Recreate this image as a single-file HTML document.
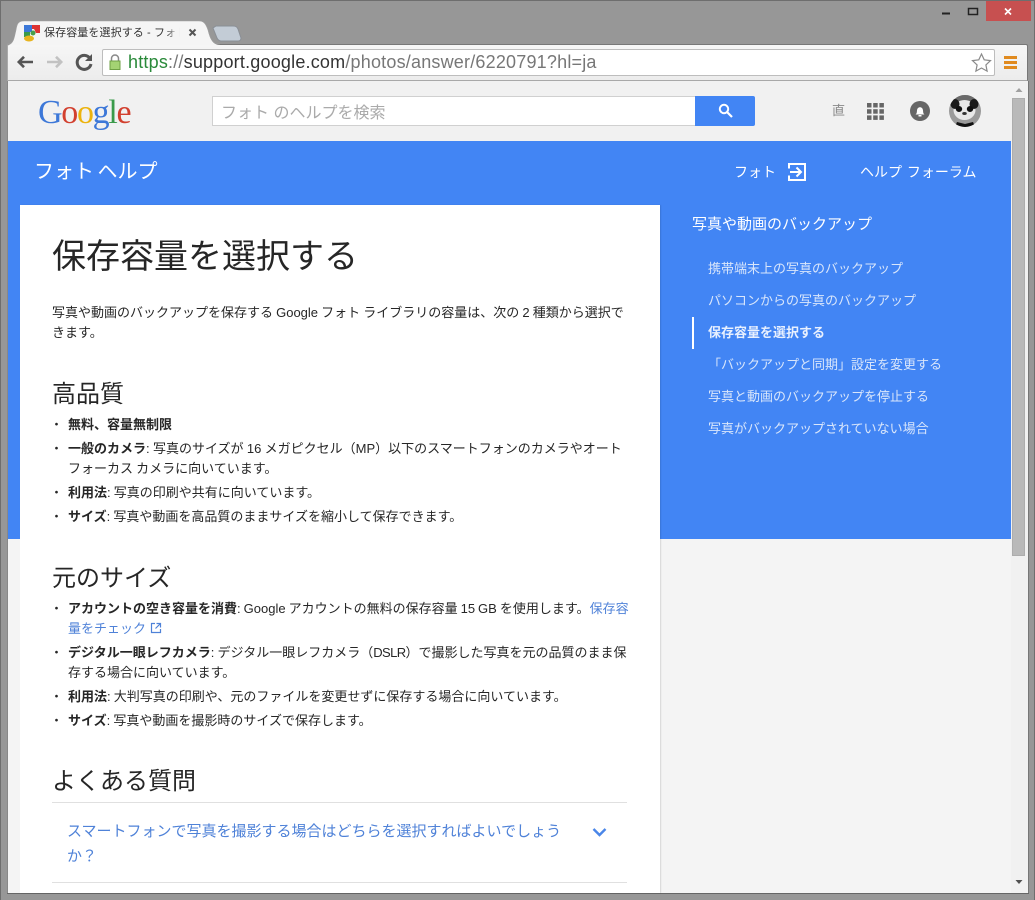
<!DOCTYPE html>
<html lang="ja"><head><meta charset="utf-8"><title>保存容量を選択する</title>
<style>
html,body{margin:0;padding:0;width:1035px;height:900px;overflow:hidden;background:#979797}
body{position:relative;font-family:"Liberation Sans","Noto Sans CJK JP",sans-serif;color:#212121}
.a{position:absolute;white-space:nowrap}
.t13{font-size:13px;line-height:20px;color:#262626}
.s{font-size:13px;color:#d9e6fb;line-height:20px;left:708px}
.h{font-size:24px;line-height:32px;color:#262626;left:52px}
.d{left:50px;font-size:13px;line-height:20px;color:#262626}
b{font-weight:700}
a{color:#4f82d8;text-decoration:none}
</style></head><body>
<!-- window frame -->
<div class="a" style="left:0;top:0;width:1035px;height:900px;box-sizing:border-box;border:1px solid #6e6e6e;border-bottom:0"></div>
<div class="a" style="left:986px;top:1px;width:45px;height:20px;background:#c75050"></div>
<svg class="a" style="left:940px;top:0" width="95" height="22"><path d="M2 13.500h8" stroke="#222" stroke-width="2"/><rect x="28.500" y="8.500" width="9" height="6" fill="none" stroke="#222" stroke-width="1.500"/><path d="M65 8.500l6 6M71 8.500l-6 6" stroke="#fff" stroke-width="1.600"/></svg>
<!-- toolbar -->
<div class="a" style="left:7px;top:44px;width:1021px;height:37px;box-sizing:border-box;background:linear-gradient(#f6f6f6,#ececec);border:1px solid #777;border-left-color:#aaa;border-bottom:1px solid #a8a8a8;border-radius:2px 2px 0 0"></div>
<!-- tab -->
<svg class="a" style="left:7px;top:20px" width="240" height="26"><path d="M209 6H226C229 6 230 7 231 9L234 18C234 20 233 21 231 21H214C212 21 211 20 210 18L206 8Z" fill="#c3ccd6" stroke="#8a8f96"/><path d="M0 25C7 25 7 18 9 10C10 4 11 1 17 1H192C197 1 199 4 201 10C203 18 205 25 213 25Z" fill="#f5f5f5" stroke="none"/><path d="M0 24C7 24 7 18 9 10C10 4 11 1 17 1H192C197 1 199 4 201 10C203 18 205 24 213 24" fill="none" stroke="#a0a0a0" stroke-width=".6"/></svg>
<svg class="a" style="left:24px;top:25px" width="17" height="17"><path d="M0 0h8v7h-8z" fill="#3c78d8"/><path d="M8 0h8v8h-4l-2-4h-2z" fill="#d33"/><path d="M0 7h6v5h-6z" fill="#3a9a4a"/><circle cx="9" cy="8" r="2.500" fill="#4a9e4a"/><ellipse cx="5" cy="13.500" rx="5" ry="3" fill="#e8b41e"/></svg>
<div class="a" style="left:44px;top:24px;width:136px;overflow:hidden;font-size:11px;line-height:18px;color:#333;letter-spacing:.1px">保存容量を選択する - フォト ヘルプ</div>
<div class="a" style="left:165px;top:24px;width:16px;height:18px;background:linear-gradient(90deg,rgba(245,245,245,0),#f5f5f5)"></div>
<svg class="a" style="left:188px;top:28px" width="10" height="10"><path d="M1.500 1.500l6 6M7.500 1.500l-6 6" stroke="#555" stroke-width="2"/></svg>
<svg class="a" style="left:14px;top:50px" width="80" height="24"><path d="M19 12H5.500M10 6.800L4.800 12l5.200 5.200" fill="none" stroke="#555" stroke-width="2.600"/><path d="M33 12H46.500M42 6.800L47.200 12 42 17.200" fill="none" stroke="#c2c2c2" stroke-width="2.600"/><path d="M76 8.500A7 7 0 1 0 77 14" fill="none" stroke="#555" stroke-width="3"/><path d="M78 4v7h-7z" fill="#555"/></svg>
<div class="a" style="left:102px;top:49px;width:893px;height:27px;box-sizing:border-box;background:#fff;border:1px solid #bdbdbd;border-radius:2px"></div>
<svg class="a" style="left:108px;top:53px" width="14" height="18"><path d="M3.500 8V5.500a3.500 3.500 0 0 1 7 0V8" fill="none" stroke="#8a8a8a" stroke-width="1.500"/><rect x="2" y="8" width="10" height="8.500" fill="#a4d373" stroke="#6fa045"/></svg>
<div class="a" style="left:128px;top:51px;font-size:18px;line-height:22px;color:#777;letter-spacing:.2px"><span style="color:#2a8a3a">https</span>://<span style="color:#333">support.google.com</span>/photos/answer/6220791?hl=ja</div>
<svg class="a" style="left:971px;top:52px" width="22" height="21"><path d="M10.500 2l2.700 5.800 6.300.8-4.600 4.300 1.200 6.200-5.600-3.100-5.600 3.100 1.200-6.200L1.500 8.600l6.300-.8z" fill="#fff" stroke="#8a8a8a" stroke-width="1.200"/></svg>
<svg class="a" style="left:1003px;top:55px" width="15" height="15"><path d="M1 2.500h13M1 7.500h13M1 12.500h13" stroke="#e08a1e" stroke-width="3"/></svg>
<!-- page -->
<div class="a" style="left:8px;top:81px;width:1003px;height:812px;background:#f4f4f4"></div>
<div class="a" style="left:8px;top:81px;width:1003px;height:60px;background:#f1f1f1"></div>
<div class="a" style="left:8px;top:141px;width:1003px;height:398px;background:#4285f4"></div>
<div class="a" style="left:1011px;top:81px;width:17px;height:812px;background:#f1f1f1"></div>
<div class="a" style="left:1012px;top:98px;width:13px;height:458px;background:#b9b9b9;box-shadow:inset 0 0 0 1px #adadad"></div>
<svg class="a" style="left:1012px;top:85px" width="14" height="808"><path d="M3.500 7l3.500-4 3.500 4z" fill="#a0a0a0"/><path d="M3.500 795l3.500 4 3.500-4z" fill="#505050"/></svg>
<div class="a" style="left:1028px;top:81px;width:1px;height:812px;background:#777"></div>
<div class="a" style="left:7px;top:81px;width:1px;height:813px;background:#888"></div>
<div class="a" style="left:7px;top:893px;width:1022px;height:1px;background:#666"></div>
<!-- header -->
<div class="a" style="left:38px;top:94px;font-family:'Liberation Serif',serif;font-size:34px;line-height:38px;letter-spacing:-1.300px"><span style="color:#3d78d8">G</span><span style="color:#d2402f">o</span><span style="color:#ecb30e">o</span><span style="color:#3d78d8">g</span><span style="color:#3a9a4a">l</span><span style="color:#d2402f">e</span></div>
<div class="a" style="left:212px;top:96px;width:484px;height:30px;box-sizing:border-box;background:#fff;border:1px solid #d0d0d0;border-right:0;padding-left:8px;font-size:16px;line-height:33px;color:#aaa">フォト のヘルプを検索</div>
<div class="a" style="left:695px;top:96px;width:60px;height:30px;background:#4285f4;border-radius:0 2px 2px 0"></div>
<svg class="a" style="left:717px;top:102px" width="18" height="18"><circle cx="7" cy="7" r="4.200" fill="none" stroke="#fff" stroke-width="2"/><path d="M10 10l5 5" stroke="#fff" stroke-width="2.200"/></svg>
<div class="a" style="left:832px;top:103px;font-size:13px;line-height:16px;color:#888">直</div>
<svg class="a" style="left:867px;top:103px" width="17" height="17"><g fill="#666"><rect width="4.500" height="4.500"/><rect x="6.200" width="4.500" height="4.500"/><rect x="12.400" width="4.500" height="4.500"/><rect y="6.200" width="4.500" height="4.500"/><rect x="6.200" y="6.200" width="4.500" height="4.500"/><rect x="12.400" y="6.200" width="4.500" height="4.500"/><rect y="12.400" width="4.500" height="4.500"/><rect x="6.200" y="12.400" width="4.500" height="4.500"/><rect x="12.400" y="12.400" width="4.500" height="4.500"/></g></svg>
<svg class="a" style="left:910px;top:101px" width="20" height="20"><circle cx="10" cy="10" r="10" fill="#666"/><path d="M5.500 13.500c1.500-1 1.300-2.500 1.500-4 .2-2 1.300-3.200 3-3.200s2.800 1.200 3 3.200c.2 1.500 0 3 1.500 4z" fill="#fff"/><rect x="8.500" y="14" width="3" height="1.500" fill="#fff"/></svg>
<svg class="a" style="left:949px;top:95px" width="32" height="32"><defs><clipPath id="c"><circle cx="16" cy="16" r="16"/></clipPath></defs><g clip-path="url(#c)"><rect width="32" height="32" fill="#9a9a9a"/><rect y="0" width="32" height="6" fill="#6a6a6a"/><ellipse cx="15.500" cy="15" rx="11" ry="10" fill="#e8e8e8"/><ellipse cx="6" cy="9" rx="4.500" ry="5" fill="#1a1a1a"/><ellipse cx="25" cy="9" rx="4.500" ry="5" fill="#1a1a1a"/><ellipse cx="10" cy="14" rx="3.200" ry="3" fill="#111"/><ellipse cx="21" cy="14" rx="3.200" ry="3" fill="#111"/><ellipse cx="15.500" cy="18.500" rx="2.300" ry="1.500" fill="#333"/><path d="M6 32l2-5 8 2 8-2 2 5z" fill="#111"/></g></svg>
<!-- blue bar -->
<div class="a" style="left:34px;top:157px;font-size:20px;line-height:30px;color:#fff;word-spacing:-2px">フォト ヘルプ</div>
<div class="a" style="left:734px;top:161px;font-size:14px;line-height:22px;color:#fff">フォト</div>
<svg class="a" style="left:787px;top:162px" width="20" height="20"><path d="M2 6.500V2H18V18H2V13.500" fill="none" stroke="#fff" stroke-width="2"/><path d="M3 10H14M9.500 5.500L14 10l-4.500 4.500" fill="none" stroke="#fff" stroke-width="2"/></svg>
<div class="a" style="left:860px;top:161px;font-size:14px;line-height:22px;color:#fff;word-spacing:1px">ヘルプ フォーラム</div>
<!-- sidebar -->
<div class="a" style="left:692px;top:214px;font-size:15px;line-height:22px;color:#fff">写真や動画のバックアップ</div>
<div class="a s" style="top:259px">携帯端末上の写真のバックアップ</div>
<div class="a s" style="top:291px">パソコンからの写真のバックアップ</div>
<div class="a" style="left:692px;top:317px;width:2px;height:32px;background:#fff"></div>
<div class="a s" style="top:323px;color:#e8f0fe;font-weight:700">保存容量を選択する</div>
<div class="a s" style="top:355px">「バックアップと同期」設定を変更する</div>
<div class="a s" style="top:387px">写真と動画のバックアップを停止する</div>
<div class="a s" style="top:419px">写真がバックアップされていない場合</div>
<!-- card -->
<div class="a" style="left:20px;top:205px;width:640px;height:688px;background:#fff;box-shadow:1px 0 1px rgba(0,0,0,.12)"></div>
<div class="a" style="left:52px;top:236px;font-size:34px;line-height:42px;color:#262626">保存容量を選択する</div>
<div class="a t13" style="left:52px;top:303px;word-spacing:-.5px">写真や動画のバックアップを保存する Google フォト ライブラリの容量は、次の 2 種類から選択で</div>
<div class="a t13" style="left:52px;top:323px">きます。</div>
<div class="a h" style="top:379px">高品質</div>
<div class="a d" style="top:415px">・</div><div class="a t13" style="left:68px;top:415px"><b>無料、容量無制限</b></div>
<div class="a d" style="top:439px">・</div><div class="a t13" style="left:68px;top:439px;word-spacing:-.3px"><b>一般のカメラ</b>: 写真のサイズが 16 メガピクセル（MP）以下のスマートフォンのカメラやオート</div>
<div class="a t13" style="left:68px;top:459px;word-spacing:-.5px">フォーカス カメラに向いています。</div>
<div class="a d" style="top:483px">・</div><div class="a t13" style="left:68px;top:483px;word-spacing:-.5px"><b>利用法</b>: 写真の印刷や共有に向いています。</div>
<div class="a d" style="top:507px">・</div><div class="a t13" style="left:68px;top:507px;word-spacing:-.5px"><b>サイズ</b>: 写真や動画を高品質のままサイズを縮小して保存できます。</div>
<div class="a h" style="top:563px">元のサイズ</div>
<div class="a d" style="top:599px">・</div><div class="a t13" style="left:68px;top:599px;word-spacing:-.6px"><b>アカウントの空き容量を消費</b>: Google アカウントの無料の保存容量 15 GB を使用します。<a>保存容</a></div>
<div class="a t13" style="left:68px;top:619px"><a>量をチェック</a></div>
<svg class="a" style="left:150px;top:622px" width="12" height="12"><path d="M5 1.500H1.500v9h9V7M6.500 1.500h4v4M10.500 1.500L5.500 6.500" fill="none" stroke="#4f82d8" stroke-width="1.200"/></svg>
<div class="a d" style="top:643px">・</div><div class="a t13" style="left:68px;top:643px;word-spacing:-.5px"><b>デジタル一眼レフカメラ</b>: デジタル一眼レフカメラ（<span style="letter-spacing:-.6px">DSLR</span>）で撮影した写真を元の品質のまま保</div>
<div class="a t13" style="left:68px;top:663px">存する場合に向いています。</div>
<div class="a d" style="top:687px">・</div><div class="a t13" style="left:68px;top:687px;word-spacing:-.5px"><b>利用法</b>: 大判写真の印刷や、元のファイルを変更せずに保存する場合に向いています。</div>
<div class="a d" style="top:711px">・</div><div class="a t13" style="left:68px;top:711px;word-spacing:-.5px"><b>サイズ</b>: 写真や動画を撮影時のサイズで保存します。</div>
<div class="a h" style="top:766px">よくある質問</div>
<div class="a" style="left:52px;top:802px;width:575px;height:1px;background:#e0e0e0"></div>
<div class="a" style="left:67px;top:819px;font-size:15px;line-height:25px;color:#4f82d8">スマートフォンで写真を撮影する場合はどちらを選択すればよいでしょう<br>か？</div>
<svg class="a" style="left:592px;top:827px" width="15" height="11"><path d="M1.500 2l6 6 6-6" fill="none" stroke="#4a86e8" stroke-width="2.400"/></svg>
<div class="a" style="left:52px;top:882px;width:575px;height:1px;background:#e0e0e0"></div>
</body></html>
